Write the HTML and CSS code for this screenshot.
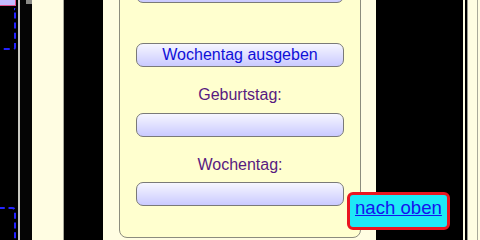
FILE: index.html
```html
<!DOCTYPE html>
<html lang="de">
<head>
<meta charset="utf-8">
<title>Wochentag</title>
<link rel="stylesheet" href="styles.css">
</head>
<body>
<div class="page">
  <div class="s1">
    <div class="lav"></div>
    <div class="dash1"></div>
    <div class="dash2"></div>
  </div>
  <div class="s2"></div>
  <div class="s3"><div class="chip"></div></div>
  <div class="s4"></div>
  <div class="s5"></div>
  <div class="s6">
    <div class="panel">
      <div class="field top"></div>
      <div class="field btn">Wochentag ausgeben</div>
      <div class="label l1">Geburtstag:</div>
      <div class="field f1"></div>
      <div class="label l2">Wochentag:</div>
      <div class="field f2"></div>
    </div>
    <a class="totop" href="#">nach oben</a>
  </div>
  <div class="s7"></div>
  <div class="s8"></div>
</div>
</body>
</html>
```
FILE: styles.css
```css
* { box-sizing: border-box; }
html, body { margin: 0; padding: 0; }
body { background: #000; font-family: "Liberation Sans", Arial, sans-serif; }
.page { display: flex; width: 480px; height: 240px; overflow: hidden; }

.s1 { width: 18px; flex: none; background: #000; display: flex; flex-direction: column; overflow: hidden; }
.lav { width: 16px; height: 6px; flex: none; background: #c4bcff; border-right: 1px solid #e0508a; border-bottom: 1px solid #e0508a; }
.dash1 { flex: none; margin-top: 2px; margin-left: -12px; width: 28px; height: 42px; border: 2px dashed #2424ff; border-top: none; border-radius: 0 0 3px 0; }
.dash2 { flex: none; margin-top: 157px; margin-left: -12px; width: 28px; height: 60px; border: 2px dashed #2424ff; border-radius: 0 4px 0 0; }

.s2 { width: 2px; flex: none; background: #c9c9c2; }
.s3 { width: 12px; flex: none; background: #050505; padding-left: 6px; }
.chip { width: 6px; height: 4px; background: #8a8a86; }
.s4 { width: 32px; flex: none; background: #fffde2; border-right: 1px solid #a9a99a; }
.s5 { width: 39px; flex: none; background: #000; }

.s6 { width: 273px; flex: none; background: #fffde2; padding-left: 16px; position: relative; }
.panel { width: 242px; height: 278px; margin-top: -40px; background: #ffffcf; border: 1px solid #8c8c7e; border-radius: 8px; padding: 0 16px; display: flex; flex-direction: column; }
.field { height: 24px; width: 208px; flex: none; border: 1px solid #7a7a78; border-radius: 7px; background: linear-gradient(#f6f6ff, #cacaff); }
.top { margin-top: 18px; }
.btn { margin-top: 40px; display: flex; align-items: center; justify-content: center; color: #1010d8; font-size: 16px; }
.label { text-align: center; color: #581a80; font-size: 16px; line-height: 20px; }
.l1 { margin-top: 18px; }
.f1 { margin-top: 8px; }
.l2 { margin-top: 18px; }
.f2 { margin-top: 7px; }

.totop { position: absolute; left: 244px; top: 192px; border: 3px solid #ea1520; border-radius: 6px; background: #1ee8f6; color: #1414ee; font-size: 18.6px; line-height: 22px; padding: 2px 5px 8px 5px; text-decoration: underline; white-space: nowrap; z-index: 2; }

.s7 { width: 87px; flex: none; background: #000; }
.s8 { width: 17px; flex: none; background: linear-gradient(to right, #fffde2 0 2px, #000 2px 4px, #9a9a8e 4px 5px, #fffde2 5px 14px, #a9a99a 14px 15px, #fffde2 15px); }
```
